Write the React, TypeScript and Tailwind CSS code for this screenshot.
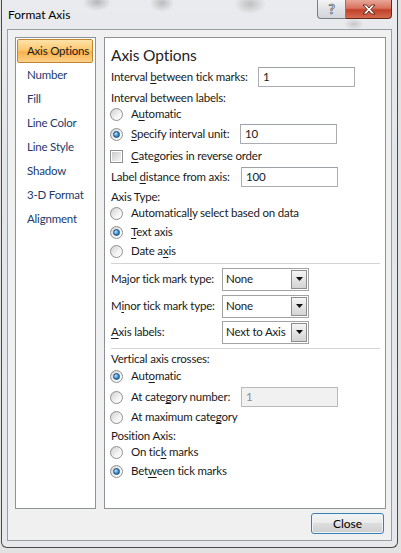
import React from "react";

function U({ children }: { children: React.ReactNode }) {
  return <span className="underline decoration-1 underline-offset-[2px]">{children}</span>;
}

function Radio({ checked }: { checked?: boolean }) {
  return (
    <span className="flex h-[13px] w-[13px] shrink-0 items-center justify-center rounded-full border border-[#8e8f8f] bg-[linear-gradient(135deg,#cfd0d0,#f4f4f4_60%,#ffffff)]">
      {checked && (
        <span className="h-[7px] w-[7px] rounded-full border border-[#1a4a78] bg-[radial-gradient(circle_at_35%_35%,#c4ecff_0%,#4a9ad8_45%,#1a4f86_100%)]" />
      )}
    </span>
  );
}

function Check() {
  return (
    <span className="flex h-[13px] w-[13px] shrink-0 items-center justify-center border border-[#8e8f8f] bg-white">
      <span className="h-[9px] w-[9px] bg-[linear-gradient(135deg,#cbcbcb,#f6f6f6)]" />
    </span>
  );
}

function TextBox({ value, disabled }: { value: string; disabled?: boolean }) {
  return (
    <div
      className={
        disabled
          ? "flex h-5 w-[97px] shrink-0 items-center border border-[#b9b9b9] bg-[#f1f1f1] pl-[4px] text-[#8c8c8c]"
          : "flex h-5 w-[97px] shrink-0 items-center border border-[#abadb3] border-t-[#9fa1a8] bg-white pl-[4px] text-[#1a1a1a]"
      }
    >
      {value}
    </div>
  );
}

function Dropdown({ value }: { value: string }) {
  return (
    <div className="flex h-[23px] w-[87px] shrink-0 items-stretch border border-[#a3a3a3] bg-white">
      <div className="flex flex-1 items-center overflow-hidden pl-[3px]">{value}</div>
      <div className="my-[1px] mr-[1px] flex w-[16px] items-center justify-center border border-[#8d8d8d] bg-[linear-gradient(to_bottom,#f6f6f6,#e4e4e4_50%,#d4d4d4)]">
        <svg width="7" height="4" viewBox="0 0 7 4">
          <path d="M0 0H7L3.5 4Z" fill="#111" />
        </svg>
      </div>
    </div>
  );
}

function RadioRow({ checked, children, mt }: { checked?: boolean; children: React.ReactNode; mt: string }) {
  return (
    <div className={`${mt} flex h-4 items-center gap-[8px] pl-[5px]`}>
      <Radio checked={checked} />
      <span>{children}</span>
    </div>
  );
}

function Label({ children, mt }: { children: React.ReactNode; mt: string }) {
  return <div className={`${mt} flex h-4 items-center pl-[6px]`}>{children}</div>;
}

const navItems = ["Number", "Fill", "Line Color", "Line Style", "Shadow", "3-D Format", "Alignment"];

export default function App() {
  return (
    <div className="relative h-[553px] w-[401px] overflow-hidden whitespace-nowrap bg-[#e2e2e2] text-[11.5px] tracking-[-0.2px] text-[#1a1a1a] [font-family:Lato,'Segoe_UI',sans-serif]">
      <div className="ml-[1px] flex h-[548px] w-[397px] flex-col rounded-b-[6px] border border-t-0 border-[#4a4a4a] bg-[linear-gradient(to_bottom,#e9ebee,#e2e5e9_30%,#e6e8eb)]">
        {/* title bar */}
        <div className="flex h-[29px] shrink-0 items-start bg-[radial-gradient(ellipse_14px_9px_at_95px_2px,rgba(140,140,140,0.55),transparent),radial-gradient(ellipse_12px_9px_at_160px_3px,rgba(140,140,140,0.5),transparent),radial-gradient(ellipse_16px_10px_at_248px_4px,rgba(140,140,140,0.45),transparent),radial-gradient(ellipse_10px_6px_at_352px_24px,rgba(150,150,150,0.4),transparent)] pl-[6px] pr-[5px]">
          <div className="pt-[7px] text-[12px] leading-[16px] tracking-normal text-black">Format Axis</div>
          <div className="ml-auto flex">
            <div className="flex h-[19px] w-[29px] items-center justify-center rounded-bl-[4px] border border-t-0 border-[#7b7f85] bg-[linear-gradient(to_bottom,#f3f4f5,#dfe2e6_50%,#d2d6db)] text-[14px] font-bold leading-none text-[#f7f7f7] [-webkit-text-stroke:0.7px_#55595e]">
              ?
            </div>
            <div className="flex h-[19px] w-[46px] items-center justify-center rounded-br-[4px] border border-t-0 border-l-0 border-[#6a261a] bg-[linear-gradient(to_bottom,#e8a698,#d9735f_45%,#c2412a_55%,#d36c52)]">
              <svg width="14" height="11" viewBox="0 0 14 11">
                <path
                  d="M1 1H4.5L7 4L9.5 1H13L8.8 5.5L13 10H9.5L7 7L4.5 10H1L5.2 5.5Z"
                  fill="#ffffff"
                  stroke="#5a2015"
                  strokeWidth="0.9"
                  strokeLinejoin="round"
                />
              </svg>
            </div>
          </div>
        </div>

        {/* client area */}
        <div className="mx-[5px] flex h-[512px] flex-col border border-[#9a9ea4] bg-[#f0f0f0] pl-[7px] pr-[6px] pt-[7px]">
          <div className="flex gap-[8px]">
            {/* left list */}
            <div className="h-[472px] w-[81px] shrink-0 border border-[#8e9298] bg-white px-[1px] pt-[1px] pr-[2px]">
              <div className="flex h-[24px] items-center rounded-[2px] border border-[#c2852f] bg-[linear-gradient(to_bottom,#fee2a8,#fdc970_45%,#fbb04a_55%,#fdd28c)] pl-[9px] text-[#1b1b1b]">
                Axis Options
              </div>
              {navItems.map((n) => (
                <div key={n} className="flex h-[24px] items-center pl-[10px] text-[#1c3a6c]">
                  {n}
                </div>
              ))}
            </div>

            {/* right panel */}
            <div className="flex h-[472px] w-[282px] shrink-0 flex-col border border-[#8e9298] bg-white pt-[6px]">
              <div className="h-[23px] pl-[6px] text-[15.5px] leading-[23px] tracking-[-0.1px] text-[#222]">Axis Options</div>

              <div className="flex h-5 items-center pl-[6px]">
                <span className="w-[147px] shrink-0">
                  Interval <U>b</U>etween tick marks:
                </span>
                <TextBox value="1" />
              </div>

              <Label mt="mt-[3px]">Interval between labels:</Label>
              <RadioRow mt="mt-0">
                A<U>u</U>tomatic
              </RadioRow>

              <div className="mt-[2px] flex h-5 items-center pl-[5px]">
                <div className="flex w-[130px] shrink-0 items-center gap-[8px]">
                  <Radio checked />
                  <span>
                    <U>S</U>pecify interval unit:
                  </span>
                </div>
                <TextBox value="10" />
              </div>

              <div className="mt-[4px] flex h-4 items-center gap-[8px] pl-[5px]">
                <Check />
                <span>
                  <U>C</U>ategories in reverse order
                </span>
              </div>

              <div className="mt-[3px] flex h-5 items-center pl-[6px]">
                <span className="w-[130px] shrink-0">
                  Label <U>d</U>istance from axis:
                </span>
                <TextBox value="100" />
              </div>

              <Label mt="mt-[2px]">Axis Type:</Label>
              <RadioRow mt="mt-0">
                Automatical<U>l</U>y select based on data
              </RadioRow>
              <RadioRow mt="mt-[3px]" checked>
                <U>T</U>ext axis
              </RadioRow>
              <RadioRow mt="mt-[3px]">
                Date a<U>x</U>is
              </RadioRow>

              <div className="ml-[6px] mt-[4px] h-px w-[269px] bg-[#d3d3d3]" />

              <div className="mt-[3px] flex h-6 items-center pl-[6px]">
                <span className="w-[111px] shrink-0">Major tick mark type:</span>
                <Dropdown value="None" />
              </div>
              <div className="mt-[3px] flex h-6 items-center pl-[6px]">
                <span className="w-[111px] shrink-0">
                  M<U>i</U>nor tick mark type:
                </span>
                <Dropdown value="None" />
              </div>
              <div className="mt-[2px] flex h-6 items-center pl-[6px]">
                <span className="w-[111px] shrink-0">
                  <U>A</U>xis labels:
                </span>
                <Dropdown value="Next to Axis" />
              </div>

              <div className="ml-[6px] mt-[4px] h-px w-[269px] bg-[#d3d3d3]" />

              <Label mt="mt-[2px]">Vertical axis crosses:</Label>
              <RadioRow mt="mt-[1px]" checked>
                Aut<U>o</U>matic
              </RadioRow>
              <div className="mt-[3px] flex h-5 items-center pl-[5px]">
                <div className="flex w-[131px] shrink-0 items-center gap-[8px]">
                  <Radio />
                  <span>
                    At cate<U>g</U>ory number:
                  </span>
                </div>
                <TextBox value="1" disabled />
              </div>
              <RadioRow mt="mt-[2px]">
                At maximum cate<U>g</U>ory
              </RadioRow>
              <Label mt="mt-[3px]">Position Axis:</Label>
              <RadioRow mt="mt-0">
                On tic<U>k</U> marks
              </RadioRow>
              <RadioRow mt="mt-[3px]" checked>
                Bet<U>w</U>een tick marks
              </RadioRow>
            </div>
          </div>

          {/* bottom buttons */}
          <div className="mt-[4px] flex justify-end pr-[1px]">
            <button className="flex h-[21px] w-[73px] items-center justify-center rounded-[3px] border border-[#3c7fb1] bg-[linear-gradient(to_bottom,#f4f4f4,#ebebeb_50%,#dddddd_50%,#cfcfcf)] text-[12px] tracking-normal text-black shadow-[inset_0_0_0_1px_#e9f5fc]">
              Close
            </button>
          </div>
        </div>
      </div>
    </div>
  );
}
